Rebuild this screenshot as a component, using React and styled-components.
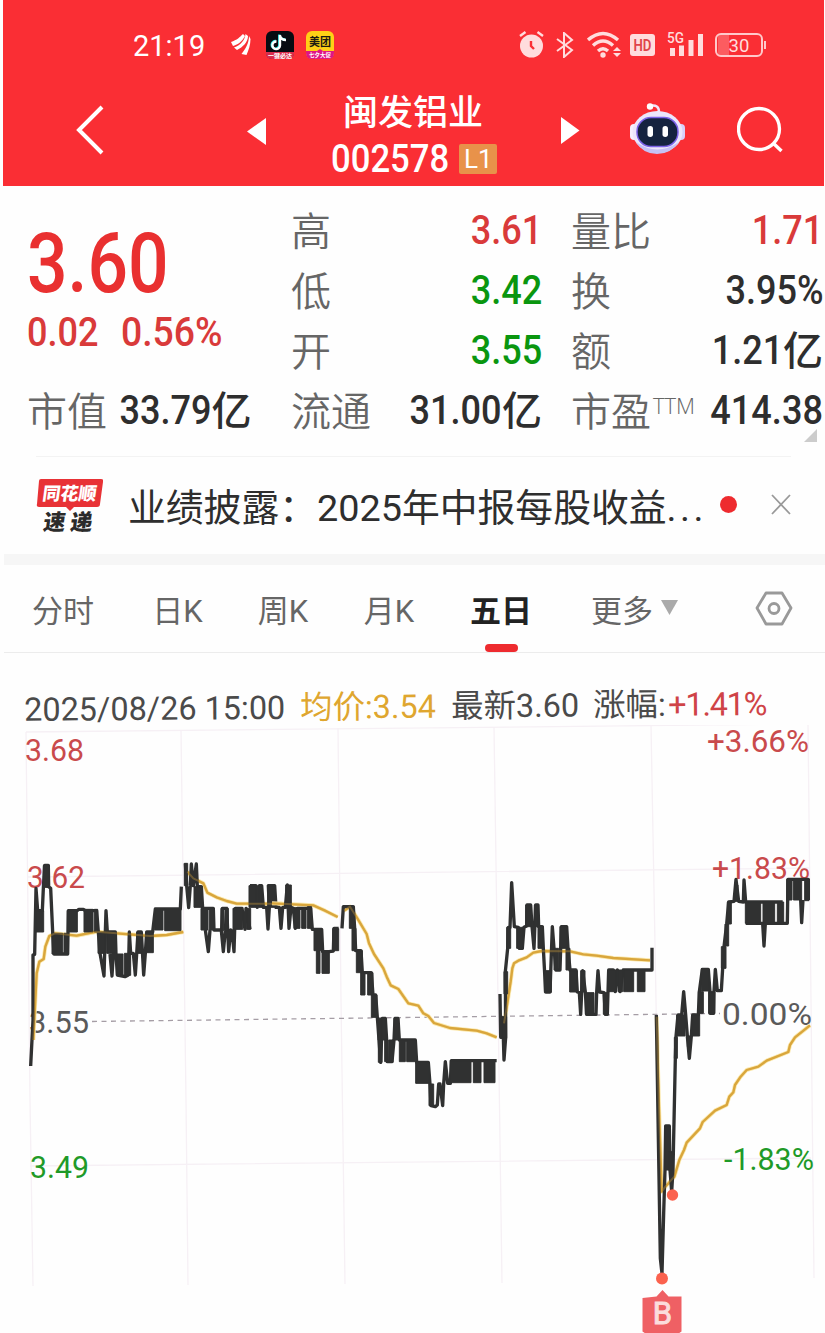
import React from "react";

import styled, { createGlobalStyle } from 'styled-components';

const GlobalStyle = createGlobalStyle`
    * {
        box-sizing: border-box;
    }
    body {
        margin: 0;
        background: #fefefe;
    }
`;

const Page = styled.div`
    width: 825px;
    height: 1333px;
    overflow: hidden;
    background: #fefefe;
    color: #2e2e2e;
    font-family: Roboto, "Noto Sans CJK SC", sans-serif;
`;

const Header = styled.header`
    height: 186px;
    margin: 0 1px 0 3px;
    background: #fa2e34;
    color: #fff;
`;

const StatusBar = styled.div`
    display: flex;
    align-items: center;
    height: 89px;
    padding: 0 57px 0 130px;
`;

const Clock = styled.span`
    width: 97px;
    font: 400 29px Roboto, sans-serif;
    padding-top: 3px;
`;

const StatusIcon = styled.svg`
    flex: none;
    display: block;
    margin-left: ${props => props.$gap || 0}px;
`;

const Spacer = styled.div`
    flex: 1;
`;

const TitleBar = styled.div`
    display: grid;
    grid-template-columns: 171px 84px 230px 69px 107px 1fr;
    height: 97px;
    padding-left: 73px;
`;

const TitleIcon = styled.svg`
    display: block;
    margin-top: ${props => props.$top}px;
`;

const StockTitle = styled.div`
    display: flex;
    flex-direction: column;
`;

const StockName = styled.div`
    height: 45px;
    padding-left: 12px;
    font-size: 35px;
    font-weight: 500;
    line-height: 50px;
    white-space: nowrap;
`;

const StockCode = styled.div`
    display: flex;
    align-items: center;
    height: 50px;
`;

const Num = styled.span`
    display: inline-block;
    font-family: Roboto, "Noto Sans CJK SC", sans-serif;
    font-size: ${props => props.$size || 41}px;
    font-weight: ${props => props.$weight || 500};
    line-height: 1;
    white-space: nowrap;
    transform: scaleX(${props => props.$stretch || 0.88});
    transform-origin: ${props => props.$from || 'left'} center;
`;

const LevelBadge = styled.span`
    width: 38px;
    height: 30px;
    flex: none;
    margin-left: -3px;
    border-radius: 2px;
    background: #e8924a;
    font: 400 26px/31px Roboto, sans-serif;
    text-align: center;
`;

const Quote = styled.section`
    position: relative;
    display: grid;
    grid-template-columns: 264px 280px 252px;
    height: 270px;
    padding: 13px 2px 0 27px;
`;

const QuoteColumn = styled.div`
    display: flex;
    flex-direction: column;
    padding-right: ${props => props.$gutter || 0}px;
`;

const PriceBlock = styled.div`
    display: flex;
    flex-direction: column;
    height: 180px;
    padding-top: 23px;
    color: #e93030;
`;

const Change = styled.div`
    display: flex;
    gap: 13px;
    margin-top: 7px;
    color: #d93a3a;
`;

const QuoteRow = styled.div`
    display: flex;
    justify-content: space-between;
    align-items: center;
    height: 60px;
    white-space: nowrap;
`;

const Label = styled.span`
    color: #666;
    font-size: 40px;
    font-weight: 350;
    line-height: 60px;
    padding-top: 7px;
`;

const Sup = styled.span`
    display: inline-block;
    margin-left: 2px;
    font: 300 22px/30px "Open Sans", sans-serif;
    transform: translateY(-12px);
`;

const Value = styled.span`
    display: flex;
    align-items: center;
    justify-content: flex-end;
    color: ${props => props.$color || '#2e2e2e'};
    padding-top: 2px;
`;

const Unit = styled.span`
    font-size: 40px;
    font-weight: 500;
    line-height: 56px;
    margin-top: 3px;
`;

const Corner = styled.i`
    position: absolute;
    right: 8px;
    bottom: 14px;
    border-style: solid;
    border-width: 0 0 13px 13px;
    border-color: transparent transparent #ccc transparent;
`;

const News = styled.section`
    display: flex;
    align-items: center;
    height: 98px;
    margin: 0 34px 0 36px;
    border-top: 1px solid #f3f3f3;
`;

const NewsText = styled.div`
    width: 583px;
    margin: 0 0 0 25px;
    font-size: 37.8px;
    font-weight: 400;
    line-height: 50px;
    padding-top: 4px;
    white-space: nowrap;
`;

const Dots = styled.span`
    letter-spacing: 3.5px;
`;

const Dot = styled.i`
    width: 17px;
    height: 17px;
    margin: 0 34px 3px 9px;
    border-radius: 50%;
    background: #ee2b2f;
`;

const Band = styled.div`
    height: 11px;
    margin-left: 4px;
    background: #f6f6f6;
`;

const Tabs = styled.nav`
    display: flex;
    height: 88px;
    margin-left: 4px;
    padding-left: 28px;
    border-bottom: 1px solid #ececec;
`;

const Tab = styled.div`
    display: flex;
    flex-direction: column;
    align-items: center;
    width: ${props => props.$width}px;
    margin-right: ${props => props.$gap}px;
    color: ${props => props.$active ? '#222' : '#666'};
    font-size: 31px;
    font-weight: ${props => props.$active ? 600 : 400};
    line-height: 93px;
    white-space: nowrap;
`;

const Underline = styled.i`
    width: 33px;
    height: 8px;
    margin-top: -14px;
    border-radius: 4px;
    background: #ee2b2f;
`;

const ChartInfo = styled.div`
    display: flex;
    height: 72px;
    padding: 33px 0 0 24px;
    font-size: 32.4px;
    font-weight: 400;
    line-height: 48px;
    white-space: nowrap;
    color: #4a4a4a;
    transform: rotate(-0.45deg);
    transform-origin: left center;
`;

const Info = styled.span`
    width: ${props => props.$width}px;
    flex: none;
    color: ${props => props.$color || 'inherit'};
    letter-spacing: ${props => props.$tight ? -1.2 : 0}px;
`;

const ChartSvg = styled.svg`
    display: block;

    text {
        font-family: Roboto, sans-serif;
        font-size: 31px;
        font-weight: 400;
    }
`;

const RED = '#d93a3a';
const GREEN = '#0a960f';
const INK = '#303131';

// every session is plotted in thirds of a pixel from its own origin
// blocks are [left, right, top, bottom] of the minutes where the price flickers
const sessions = [
    {
        x: 0, y: 720,
        price: 'M92 1038L99 900V705L104 703L108 505L113 572H127L130 505L134 436H145L146 500L152 505L158 636L162 702H203L205 572H232L236 568H250L256 572H290L295 636L300 700L312 768L314 700L318 572L322 636H346L348 702M330 702L336 768L340 702H348L352 765L375 770L385 765L388 636L392 700H400L406 765L410 702L414 636H424L431 765L436 700L440 636H458L466 567H541L544 500',
        avg: 'M100 960L106 840L110 760L118 725L131 717L136 680L148 648L165 640L230 647L290 635L350 640L450 648L500 645L550 636',
        blocks: [[108, 131, 572, 636], [130, 146, 436, 502], [156, 188, 640, 702], [192, 205, 640, 702], [202, 232, 572, 636], [252, 279, 568, 636], [283, 293, 568, 636], [294, 316, 636, 700], [320, 348, 636, 700], [350, 369, 702, 766], [373, 392, 700, 766], [410, 425, 636, 700], [437, 460, 636, 698], [464, 489, 567, 630], [494, 543, 567, 632]],
    },
    {
        x: 0, y: 720,
        price: 'M556 430L560 497L566 563L571 497L574 432L580 497L589 432L592 500H604L608 565H640L642 630H665L667 565H683M616 630L625 695L630 630M664 632L670 695L676 632L680 565L686 695L692 630L696 632L702 695L706 565H726L735 628L738 565L750 628M750 497H768L772 562L778 497H785L790 562H800L804 627L808 562L805 497H824L828 562',
        avg: 'M562 455L580 475L610 490L622 518L650 532L680 543L710 551H846',
        blocks: [[553, 563, 430, 497], [582, 607, 500, 562], [603, 624, 565, 630], [628, 641, 565, 630], [663, 671, 565, 632], [675, 685, 565, 632], [699, 728, 565, 628], [740, 752, 565, 628], [747, 769, 497, 562], [777, 787, 497, 562], [803, 825, 497, 562]],
    },
    {
        x: 270, y: 840,
        price: 'M14 202H28L33 265L38 202H46L52 135L57 265L63 202L70 205L76 265L82 205H122L127 268H155L158 335H178L190 333L192 265L206 265',
        avg: 'M6 190L130 196L165 212L203 231',
        blocks: [[47, 64, 135, 200], [72, 90, 203, 265], [95, 108, 203, 265], [112, 125, 200, 265], [132, 157, 268, 332], [139, 150, 332, 400], [156, 178, 335, 400], [188, 206, 266, 332]],
    },
    {
        x: 270, y: 840,
        price: 'M216 265L220 200H250L254 265L257 332H273L277 398H304L309 465H317L322 532L332 667L337 535H346L350 600L352 665H366L372 600L375 535H384L388 600H436L440 667H475L480 732L483 797L496 800L502 795L506 732H510L518 797L521 732L526 665L533 730H541L544 662H680',
        avg: 'M222 212L240 200L262 235L290 282L297 310L312 342L340 385L350 410L362 436L385 447L415 490L445 497L460 520L475 528L492 549L540 564L620 572L650 580L680 592',
        blocks: [[238, 252, 200, 265], [246, 258, 265, 332], [259, 277, 332, 398], [272, 285, 398, 465], [293, 309, 398, 465], [304, 321, 465, 532], [324, 334, 535, 600], [325, 336, 600, 667], [337, 347, 535, 600], [344, 352, 600, 665], [356, 369, 600, 667], [372, 386, 535, 600], [388, 406, 600, 665], [410, 438, 600, 665], [437, 477, 667, 730], [477, 491, 732, 797], [541, 603, 662, 728], [610, 633, 662, 728], [642, 675, 662, 728]],
    },
    {
        x: 480, y: 840,
        price: 'M60 462L62 592H70L72 660L77 592L76 395L83 325L85 262H90L95 128L103 260L115 262L118 325H127L132 262L140 258L141 195H152L156 258L162 325L167 195H174L176 260H187L190 325L197 456H210L217 260L222 325L228 390H240L244 260H260L264 325L270 390H288L292 456L298 458L302 523L308 392L316 456L320 523H348L350 458L354 392L359 456L372 458L376 523H382L386 390H400L406 455L412 390L420 455L430 390H516V323',
        avg: 'M72 550L82 490L92 425L97 385L102 370L115 362L140 352L160 338L185 333L270 334L310 343L350 347L400 354L510 361',
        blocks: [[66, 80, 530, 595], [72, 83, 395, 462], [80, 92, 262, 325], [110, 130, 262, 325], [137, 154, 195, 260], [163, 175, 195, 260], [174, 190, 260, 325], [193, 214, 392, 457], [222, 236, 325, 390], [240, 262, 260, 325], [258, 270, 325, 390], [269, 292, 392, 456], [302, 315, 392, 456], [316, 342, 458, 523], [370, 385, 458, 523], [385, 409, 390, 455], [414, 428, 390, 455], [431, 461, 390, 455], [472, 495, 390, 455]],
    },
    {
        x: 480, y: 840,
        price: 'M529 525L541 1255L546 1300L551 1120L555 990L557 858H568L570 990L575 1055L579 990L586 655L588 590L594 525H605L611 455L617 525L622 588L628 655L634 588L638 525H655L658 455L667 388H685L690 455V520H701L702 455L706 388L712 452H724L728 385L732 320L740 252L746 186L762 184L768 118L776 184L790 186L792 120L797 186H908M797 250H922L924 118H985V180M848 250L852 318L856 250M962 180L965 248L969 180',
        avg: 'M530 530L537 800L545 1055L556 1040L583 1010L598 960L612 930L620 908L660 865L668 846L705 812L740 795L748 770L760 757L765 735L782 710L800 690L835 680L860 662L925 636L930 615L945 592L990 556',
        blocks: [[554, 570, 858, 990], [566, 578, 935, 990], [583, 592, 592, 655], [590, 615, 525, 588], [622, 632, 588, 620], [635, 659, 525, 588], [655, 670, 455, 520], [664, 688, 388, 453], [686, 704, 455, 520], [724, 738, 320, 385], [735, 746, 252, 318], [742, 754, 186, 252], [764, 774, 135, 184], [796, 842, 186, 250], [849, 884, 186, 250], [892, 911, 186, 250], [920, 936, 118, 180], [940, 965, 118, 180], [974, 987, 118, 182]],
    },
];

const scaleLabels = [
    { x: 25, y: 761, width: 59, color: '#c94a4c', text: '3.68' },
    { x: 27, y: 888, width: 58, color: '#c94a4c', text: '3.62' },
    { x: 29, y: 1033, width: 60, color: '#5a5a5a', text: '3.55' },
    { x: 30, y: 1178, width: 59, color: '#1f9a28', text: '3.49' },
    { x: 707, y: 752, width: 102, color: '#c94a4c', text: '+3.66%' },
    { x: 712, y: 879, width: 98, color: '#c94a4c', text: '+1.83%' },
    { x: 722, y: 1025, width: 90, color: '#5a5a5a', text: '0.00%' },
    { x: 724, y: 1170, width: 90, color: '#1f9a28', text: '-1.83%' },
];

const highLow = [
    { label: '高', value: '3.61', color: RED },
    { label: '低', value: '3.42', color: GREEN },
    { label: '开', value: '3.55', color: GREEN },
    { label: '流通', value: '31.00', unit: '亿' },
];

const ratios = [
    { label: '量比', value: '1.71', color: RED },
    { label: '换', value: '3.95%' },
    { label: '额', value: '1.21', unit: '亿' },
    { label: '市盈', sup: 'TTM', value: '414.38' },
];

const tabs = [
    { text: '分时', width: 62, gap: 59 },
    { text: '日K', width: 49, gap: 56 },
    { text: '周K', width: 50, gap: 56 },
    { text: '月K', width: 50, gap: 57 },
    { text: '五日', width: 60, gap: 60, active: true },
    { text: '更多', width: 62, gap: 8 },
];

function QuoteItem({ label, sup, value, unit, color }) {
    return (
        <QuoteRow>
            <Label>{label}{sup && <Sup>{sup}</Sup>}</Label>
            <Value $color={color}>
                <Num $from="right">{value}</Num>
                {unit && <Unit>{unit}</Unit>}
            </Value>
        </QuoteRow>
    );
}

function Status() {
    return (
        <StatusBar>
            <Clock>21:19</Clock>
            <StatusIcon width="22" height="24" viewBox="0 0 22 24" fill="#fff">
                <path d="M1 9C7 7 10 4 13 1l2 2C12 9 7 12 3 13zM15.500 1l2.500 2c0 6-5 11-11 14l-3-2.500C11 12 15 7 15.500 1zM19 3l1.500 3c0 6-2 11-4 16l-5-1c4-5 7.500-11 7.500-18z" />
            </StatusIcon>
            <StatusIcon $gap={14} width="28" height="28" viewBox="0 0 28 28">
                <rect width="28" height="28" rx="6" fill="#080b12" />
                <g fill="none" strokeWidth="2.4">
                    <path d="M14 4v10.500a3.800 3.800 0 1 1-3.500-4M14 5c1 3 3 4 6 4" stroke="#24e5e5" transform="translate(-.7 -.5)" />
                    <path d="M14 4v10.500a3.800 3.800 0 1 1-3.500-4M14 5c1 3 3 4 6 4" stroke="#fff" />
                </g>
                <path d="M0 21h28v2q0 5-6 5H6q-6 0-6-5z" fill="#d92c4c" />
                <text x="14" y="27" fontSize="6" fontWeight="700" fill="#fff" textAnchor="middle">一键必达</text>
            </StatusIcon>
            <StatusIcon $gap={12} width="28" height="28" viewBox="0 0 28 28">
                <rect width="28" height="28" rx="6" fill="#ffd016" />
                <path d="M0 20h11l3-2 3 2h11v2q0 6-6 6H6q-6 0-6-6z" fill="#df1586" />
                <text x="14" y="15" fontSize="11" fontWeight="700" fill="#1c1a12" textAnchor="middle">美团</text>
                <text x="14" y="26" fontSize="5.500" fontWeight="700" fill="#fff" textAnchor="middle">七夕大促</text>
            </StatusIcon>
            <Spacer />
            <StatusIcon width="25" height="27" viewBox="0 0 25 27">
                <circle cx="12.500" cy="15" r="11.500" fill="#ffdcdd" />
                <path d="M1 5l5.500-4M24 5l-5.500-4" stroke="#ffdcdd" strokeWidth="2.400" />
                <path d="M12 10v5l3 3" fill="none" stroke="#fa2e34" strokeWidth="2.400" />
            </StatusIcon>
            <StatusIcon $gap={12} width="18" height="26" viewBox="0 0 18 26">
                <path d="M1 7l15 11-8 7V1l8 7L1 19" fill="none" stroke="#ffdcdd" strokeWidth="2" />
            </StatusIcon>
            <StatusIcon $gap={13} width="35" height="28" viewBox="0 0 35 28">
                <g fill="none" stroke="#ffdcdd" strokeWidth="3.400">
                    <path d="M1 9q15-13 30 0M6 14.500q10-9 20 0M11 20q5-4.500 10 0" />
                </g>
                <circle cx="16" cy="24" r="2.700" fill="#ffdcdd" />
                <path d="M26 20l4-4 4 4zM26 22h8l-4 4z" fill="#ffdcdd" />
            </StatusIcon>
            <StatusIcon $gap={8} width="25" height="22" viewBox="0 0 25 22">
                <rect width="25" height="22" rx="3" fill="#ffdcdd" />
                <text x="12.500" y="17" fontFamily="Roboto" fontSize="16.500" fontWeight="600" fill="#e0444a" textAnchor="middle" textLength="18" lengthAdjust="spacingAndGlyphs">HD</text>
            </StatusIcon>
            <StatusIcon $gap={12} width="37" height="29" viewBox="0 -1 37 29" fill="#ffdcdd">
                <text x="0" y="12" fontFamily="Roboto" fontSize="15" fontWeight="500" textLength="17" lengthAdjust="spacingAndGlyphs">5G</text>
                <path d="M3 17h5v8H3zM12 14.500h5V25h-5zM21.500 9h5v16h-5zM31 3h5v22h-5z" />
            </StatusIcon>
            <StatusIcon $gap={11} width="52" height="24" viewBox="0 0 52 24">
                <path d="M3 2h11v20H3z" fill="#fc5c60" />
                <rect x="1" y="1" width="46" height="22" rx="5" fill="none" stroke="#ffc9ca" strokeWidth="2" />
                <path d="M50 8v8" stroke="#ffc9ca" strokeWidth="2" />
                <text x="24" y="18.500" fontFamily="Roboto" fontSize="18.500" fill="#ffdcdd" textAnchor="middle">30</text>
            </StatusIcon>
        </StatusBar>
    );
}

function Title() {
    return (
        <TitleBar>
            <TitleIcon $top={15} width="30" height="52" viewBox="0 0 30 52">
                <path d="M26 3L3 26l23 23" fill="none" stroke="#fff" strokeWidth="4" />
            </TitleIcon>
            <TitleIcon $top={29} width="20" height="27" viewBox="0 0 20 27">
                <path d="M0 13.500L19 0v27z" fill="#fff" />
            </TitleIcon>
            <StockTitle>
                <StockName>闽发铝业</StockName>
                <StockCode>
                    <Num $size={38.5} $stretch={0.9}>002578</Num>
                    <LevelBadge>L1</LevelBadge>
                </StockCode>
            </StockTitle>
            <TitleIcon $top={28} width="20" height="27" viewBox="0 0 20 27">
                <path d="M0 0l18.500 13.500L0 27z" fill="#fff" />
            </TitleIcon>
            <TitleIcon $top={13} width="56" height="54" viewBox="0 0 56 54">
                <path d="M20 4q9-2 9 6" fill="none" stroke="#f1e6fa" strokeWidth="2.500" />
                <circle cx="20" cy="4.500" r="3.200" fill="#fff" />
                <rect x="0" y="22" width="9" height="16" rx="4" fill="#f6f0ff" />
                <rect x="46" y="22" width="9" height="16" rx="4" fill="#d8d0fa" />
                <ellipse cx="27.500" cy="30" rx="25" ry="21" fill="#ece6fb" />
                <path d="M6 40q21 15 43 0-8 12-22 12T6 40z" fill="#c5c1f5" />
                <rect x="7" y="15.500" width="41" height="29" rx="14" fill="#15233f" stroke="#7d63e8" strokeWidth="1.500" />
                <rect x="17.500" y="24" width="5.500" height="11" rx="2.700" fill="#fff" />
                <rect x="32.500" y="24" width="5.500" height="11" rx="2.700" fill="#fff" />
            </TitleIcon>
            <TitleIcon $top={17} width="48" height="48" viewBox="0 0 48 48">
                <circle cx="22" cy="23" r="20.500" fill="none" stroke="#fff" strokeWidth="3.300" />
                <path d="M36 37l8.500 8" stroke="#fff" strokeWidth="3.500" />
            </TitleIcon>
        </TitleBar>
    );
}

function Chart() {
    return (
        <ChartSvg width="825" height="608" viewBox="0 725 825 608">
            <g fill="none" stroke="#f6f0f5" strokeWidth="1.300">
                <path d="M26 732L808 724M28 877L810 868M30 1166L811 1158" />
                <path d="M26 732L30 1100L33 1286M181 730L186 1100L188 1285M338 728L341 1000L345 1284M494 727L498 1000L502 1283M651 725L656 1000L660 1270M808 724L811 1000L814 1278" />
            </g>
            <path d="M92 1021.500L720 1013.500" fill="none" stroke="#a59da5" strokeWidth="1.300" strokeDasharray="5 4.500" />
            {scaleLabels.map(item => (
                <text key={item.text} x={item.x} y={item.y} fill={item.color} textLength={item.width} lengthAdjust="spacingAndGlyphs">{item.text}</text>
            ))}
            {sessions.map((item, index) => (
                <g key={index} transform={`translate(${item.x} ${item.y}) scale(0.33333)`} strokeLinejoin="round">
                    <path d={item.avg} fill="none" stroke="#fbe8ac" strokeWidth="12" />
                    <path d={item.avg} fill="none" stroke="#d9a63c" strokeWidth="7" />
                    <path d={item.price} fill="none" stroke={INK} strokeWidth="10" />
                    {item.blocks.map(([left, right, top, bottom]) => (
                        <rect key={`${left}-${top}`} x={left} y={top} width={right - left} height={bottom - top} fill={INK} stroke={INK} strokeWidth="3" />
                    ))}
                    <path d={item.avg} fill="none" stroke="#d9a63c" strokeWidth="6" opacity="0.35" />
                </g>
            ))}
            <circle cx="672.500" cy="1195" r="5.700" fill="#fb624e" />
            <circle cx="662" cy="1278.500" r="6" fill="#fb624e" />
            <path d="M642.500 1298l14-1.500 6-6.500 6 6.500 13 0v35l-3 2h-33l-3-2z" fill="#ef6064" />
            <text x="662.500" y="1324" fill="#fbdcdc" stroke="#fbdcdc" textAnchor="middle">B</text>
        </ChartSvg>
    );
}

export default function App() {
    return (
        <Page>
            <GlobalStyle />
            <Header>
                <Status />
                <Title />
            </Header>
            <Quote>
                <QuoteColumn $gutter={41}>
                    <PriceBlock>
                        <Num $size={83} $stretch={0.86}>3.60</Num>
                        <Change>
                            <Num>0.02</Num>
                            <Num $stretch={0.91}>0.56%</Num>
                        </Change>
                    </PriceBlock>
                    <QuoteItem label="市值" value="33.79" unit="亿" />
                </QuoteColumn>
                <QuoteColumn $gutter={29}>
                    {highLow.map(item => <QuoteItem key={item.label} {...item} />)}
                </QuoteColumn>
                <QuoteColumn>
                    {ratios.map(item => <QuoteItem key={item.label} {...item} />)}
                </QuoteColumn>
                <Corner />
            </Quote>
            <News>
                <svg width="67" height="58" viewBox="0 0 67 58">
                    <path d="M5 2h60q3 0 2 3l-3 22q0 3-3 3H38l-4 4-4-4H3q-3 0-2-3L3 4q0-2 2-2z" fill="#e83236" />
                    <g fontWeight="900" textAnchor="middle" transform="skewX(-8)">
                        <text x="36" y="23" fontSize="18" fill="#fff">同花顺</text>
                        <text x="38.500" y="53" fontSize="22" fill="#2b2b2b" textLength="49">速递</text>
                    </g>
                </svg>
                <NewsText>业绩披露：2025年中报每股收益<Dots>...</Dots></NewsText>
                <Dot />
                <svg width="20" height="26" viewBox="0 0 20 26">
                    <path d="M1 2l18 19M19 2L1 21" stroke="#999" strokeWidth="1.800" />
                </svg>
            </News>
            <Band />
            <Tabs>
                {tabs.map(item => (
                    <Tab key={item.text} $width={item.width} $gap={item.gap} $active={item.active}>
                        {item.text}
                        {item.active && <Underline />}
                    </Tab>
                ))}
                <svg width="18" height="88" viewBox="0 0 18 88">
                    <path d="M0 35h17L8.500 50z" fill="#aaa" />
                </svg>
                <Spacer />
                <svg width="70" height="88" viewBox="0 0 70 88">
                    <g fill="none" stroke="#999" strokeWidth="2.800">
                        <path d="M11 28h16l9 15-9 16H11L2 43z" strokeLinejoin="round" />
                        <circle cx="19" cy="43.500" r="5" />
                    </g>
                </svg>
            </Tabs>
            <ChartInfo>
                <Info $width={276}>2025/08/26 15:00</Info>
                <Info $width={151} $color="#dfa62f">均价:3.54</Info>
                <Info $width={142}>最新3.60</Info>
                <Info $width={75}>涨幅:</Info>
                <Info $color="#cf4347" $tight>+1.41%</Info>
            </ChartInfo>
            <Chart />
        </Page>
    );
}
